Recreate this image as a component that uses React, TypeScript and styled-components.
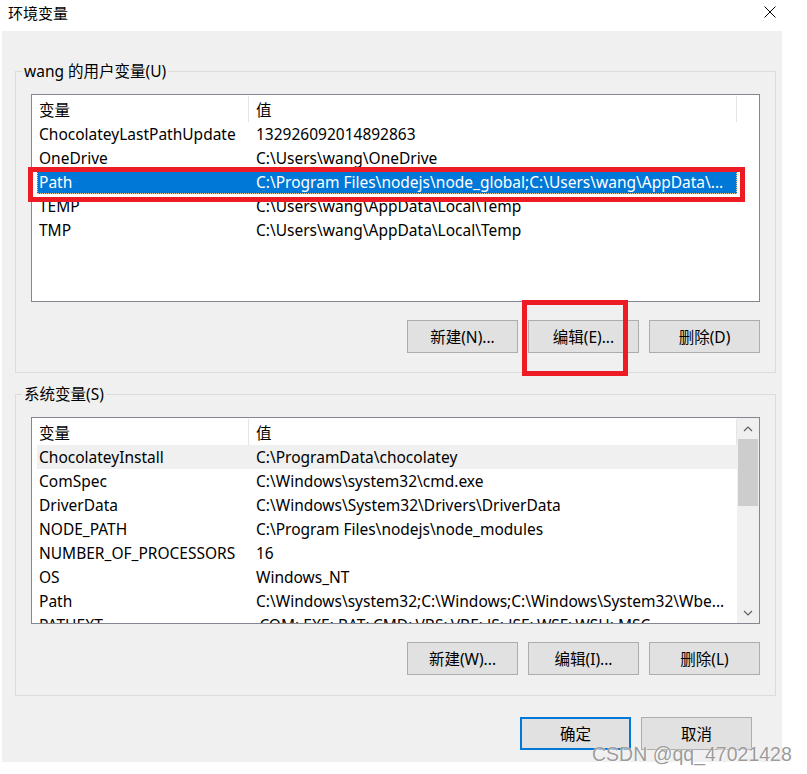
import React from "react";
import styled, { createGlobalStyle } from "styled-components";

const GlobalStyle = createGlobalStyle`
  html, body { margin: 0; padding: 0; background: #fff; }
  body {
    font-family: "Noto Sans", "Noto Sans CJK SC", sans-serif;
    font-size: 15.5px;
    color: #000;
  }
  * { box-sizing: border-box; }
`;

const Window = styled.div`
  position: relative;
  width: 807px;
  height: 774px;
  background: #fff;
  overflow: hidden;
`;

const TitleBar = styled.div`
  height: 31px;
  display: flex;
  align-items: flex-start;
  justify-content: space-between;
  padding: 3px 31px 0 8px;
`;

const Title = styled.div`
  font-size: 15px;
  line-height: 20px;
`;

const CloseIcon = styled.svg`
  margin-top: 3px;
  width: 12px;
  height: 12px;
`;

const Body = styled.div`
  width: 780px;
  height: 731px;
  margin-left: 2px;
  background: #f0f0f0;
  padding: 30px 6px 0 13px;
  display: flex;
  flex-direction: column;
`;

const Group = styled.fieldset<{ $mt: number }>`
  margin: ${(p) => p.$mt}px 0 0 0;
  padding: 0;
  min-width: 0;
  border: 1px solid #dcdcdc;
`;

const Legend = styled.legend`
  margin-left: 6px;
  padding: 0 2px;
  line-height: 20px;
  font-size: 15.5px;
`;

const GroupInner = styled.div<{ $pb: number }>`
  padding: 13px 15px ${(p) => p.$pb}px 15px;
  display: flex;
  flex-direction: column;
  gap: 18px;
`;

const ListBox = styled.div<{ $h: number }>`
  height: ${(p) => p.$h}px;
  border: 1px solid #828790;
  background: #fff;
  display: flex;
  overflow: hidden;
`;

const ListContent = styled.div`
  width: 705px;
  flex: none;
  padding-left: 5px;
  overflow: hidden;
`;

const HeaderRow = styled.div`
  display: grid;
  grid-template-columns: 212px 488px;
  height: 27px;
`;

const HeaderCell = styled.div<{ $first?: boolean }>`
  display: flex;
  align-items: center;
  padding-left: ${(p) => (p.$first ? 2 : 7)}px;
  margin: 1px 0 0 0;
  border-right: 1px solid #e5e5e5;
  white-space: nowrap;
`;

const Row = styled.div<{ $state?: "selected" | "hover" }>`
  display: grid;
  grid-template-columns: 212px 488px;
  height: 24px;
  align-items: center;
  background: ${(p) =>
    p.$state === "selected" ? "#0078d7" : p.$state === "hover" ? "#f0f0f0" : "transparent"};
  color: ${(p) => (p.$state === "selected" ? "#fff" : "#000")};
  outline: ${(p) => (p.$state === "selected" ? "1px dotted #f3c58f" : "none")};
  outline-offset: -1px;
`;

const Cell = styled.div<{ $first?: boolean }>`
  padding-left: ${(p) => (p.$first ? 2 : 7)}px;
  white-space: nowrap;
  overflow: hidden;
  line-height: 24px;
`;

const ScrollBar = styled.div`
  width: 22px;
  flex: none;
  background: #f0f0f0;
  display: flex;
  flex-direction: column;
`;

const ScrollArrow = styled.div`
  height: 21px;
  display: flex;
  align-items: center;
  justify-content: center;
`;

const ScrollTrack = styled.div`
  flex: 1;
  padding: 0 1px;
`;

const ScrollThumb = styled.div`
  height: 67px;
  background: #cdcdcd;
`;

const ButtonRow = styled.div<{ $pt?: number; $pr?: number }>`
  display: flex;
  justify-content: flex-end;
  gap: 10px;
  padding: ${(p) => p.$pt ?? 0}px ${(p) => p.$pr ?? 0}px 0 0;
`;

const Button = styled.button<{ $default?: boolean }>`
  width: 111px;
  height: 33px;
  padding: 0;
  background: #e1e1e1;
  border: ${(p) => (p.$default ? "2px solid #0078d7" : "1px solid #adadad")};
  font-family: inherit;
  font-size: 15.5px;
  color: #000;
`;

const Annotation = styled.div<{ $x: number; $y: number; $w: number; $h: number }>`
  position: absolute;
  left: ${(p) => p.$x}px;
  top: ${(p) => p.$y}px;
  width: ${(p) => p.$w}px;
  height: ${(p) => p.$h}px;
  border: 5px solid #ed1c24;
  pointer-events: none;
`;

const Watermark = styled.div`
  position: absolute;
  left: 592px;
  top: 744px;
  font-family: "Liberation Sans", Arial, sans-serif;
  font-size: 19.5px;
  line-height: 20px;
  color: #9c9c9c;
  text-shadow: 0 0 1px #ffffff, 1px 1px 0 rgba(255, 255, 255, 0.7);
  white-space: nowrap;
`;

type Item = { name: string; value: string; state?: "selected" | "hover" };

const userVars: Item[] = [
  { name: "ChocolateyLastPathUpdate", value: "132926092014892863" },
  { name: "OneDrive", value: "C:\\Users\\wang\\OneDrive" },
  {
    name: "Path",
    value: "C:\\Program Files\\nodejs\\node_global;C:\\Users\\wang\\AppData\\...",
    state: "selected",
  },
  { name: "TEMP", value: "C:\\Users\\wang\\AppData\\Local\\Temp" },
  { name: "TMP", value: "C:\\Users\\wang\\AppData\\Local\\Temp" },
];

const systemVars: Item[] = [
  { name: "ChocolateyInstall", value: "C:\\ProgramData\\chocolatey", state: "hover" },
  { name: "ComSpec", value: "C:\\Windows\\system32\\cmd.exe" },
  { name: "DriverData", value: "C:\\Windows\\System32\\Drivers\\DriverData" },
  { name: "NODE_PATH", value: "C:\\Program Files\\nodejs\\node_modules" },
  { name: "NUMBER_OF_PROCESSORS", value: "16" },
  { name: "OS", value: "Windows_NT" },
  { name: "Path", value: "C:\\Windows\\system32;C:\\Windows;C:\\Windows\\System32\\Wbe..." },
  { name: "PATHEXT", value: ".COM;.EXE;.BAT;.CMD;.VBS;.VBE;.JS;.JSE;.WSF;.WSH;.MSC" },
];

const Chevron = ({ up }: { up?: boolean }) => (
  <svg width="10" height="6" viewBox="0 0 10 6">
    <path
      d={up ? "M1 5 L5 1 L9 5" : "M1 1 L5 5 L9 1"}
      fill="none"
      stroke="#606060"
      strokeWidth="1.2"
    />
  </svg>
);

const VarList = ({ items, height, scroll }: { items: Item[]; height: number; scroll?: boolean }) => (
  <ListBox $h={height}>
    <ListContent>
      <HeaderRow>
        <HeaderCell $first>变量</HeaderCell>
        <HeaderCell>值</HeaderCell>
      </HeaderRow>
      {items.map((it) => (
        <Row key={it.name + it.value} $state={it.state}>
          <Cell $first>{it.name}</Cell>
          <Cell>{it.value}</Cell>
        </Row>
      ))}
    </ListContent>
    {scroll && (
      <ScrollBar>
        <ScrollArrow>
          <Chevron up />
        </ScrollArrow>
        <ScrollTrack>
          <ScrollThumb />
        </ScrollTrack>
        <ScrollArrow>
          <Chevron />
        </ScrollArrow>
      </ScrollBar>
    )}
  </ListBox>
);

export default function App() {
  return (
    <>
      <GlobalStyle />
      <Window>
        <TitleBar>
          <Title>环境变量</Title>
          <CloseIcon viewBox="0 0 12 12">
            <path d="M0.5 0.5 L11.5 11.5 M11.5 0.5 L0.5 11.5" stroke="#000" strokeWidth="1" />
          </CloseIcon>
        </TitleBar>
        <Body>
          <Group $mt={0}>
            <Legend>wang 的用户变量(U)</Legend>
            <GroupInner $pb={19}>
              <VarList items={userVars} height={208} />
              <ButtonRow>
                <Button>新建(N)...</Button>
                <Button>编辑(E)...</Button>
                <Button>删除(D)</Button>
              </ButtonRow>
            </GroupInner>
          </Group>
          <Group $mt={11}>
            <Legend>系统变量(S)</Legend>
            <GroupInner $pb={20}>
              <VarList items={systemVars} height={207} scroll />
              <ButtonRow>
                <Button>新建(W)...</Button>
                <Button>编辑(I)...</Button>
                <Button>删除(L)</Button>
              </ButtonRow>
            </GroupInner>
          </Group>
          <ButtonRow $pt={21} $pr={24}>
            <Button $default>确定</Button>
            <Button>取消</Button>
          </ButtonRow>
        </Body>
        <Annotation $x={28} $y={167} $w={717} $h={35} />
        <Annotation $x={522} $y={300} $w={106} $h={76} />
        <Watermark>CSDN @qq_47021428</Watermark>
      </Window>
    </>
  );
}
